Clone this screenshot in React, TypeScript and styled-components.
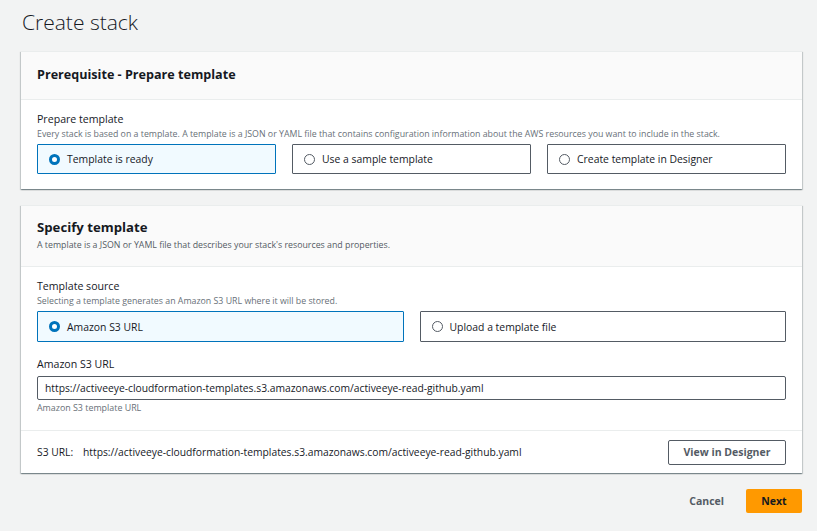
import React from "react";
import styled, { createGlobalStyle } from "styled-components";

const Global = createGlobalStyle`
  html, body { margin: 0; padding: 0; background: #f2f3f3; }
  body { font-family: "Open Sans", "Noto Sans", sans-serif; color: #16191f; }
  * { box-sizing: border-box; }
`;

const Page = styled.div`
  width: 817px;
  height: 531px;
  padding: 8px 15px 0 21px;
  display: flex;
  flex-direction: column;
`;

const Title = styled.h1`
  margin: 0 0 0 1px;
  font-size: 21px;
  font-weight: 300;
  line-height: 28px;
  color: #16191f;
`;

const Card = styled.section<{ $mt: number }>`
  margin-top: ${(p) => p.$mt}px;
  background: #fff;
  box-shadow: 0 1px 1px 0 rgba(0, 28, 36, 0.3), 1px 1px 1px 0 rgba(0, 28, 36, 0.15),
    -1px 1px 1px 0 rgba(0, 28, 36, 0.15);
  border-top: 1px solid #eaeded;
`;

const CardHeader = styled.header<{ $h: number; $pt: number }>`
  height: ${(p) => p.$h}px;
  background: #fafafa;
  border-bottom: 1px solid #eaeded;
  padding: ${(p) => p.$pt}px 16px 0;
  display: flex;
  flex-direction: column;
`;

const HeaderTitle = styled.h2<{ $size: number }>`
  margin: 0;
  font-size: ${(p) => p.$size}px;
  font-weight: 700;
  line-height: 18px;
  color: #16191f;
`;

const HeaderDesc = styled.p`
  margin: 3px 0 0;
  font-size: 8.8px;
  line-height: 12px;
  color: #545b64;
`;

const CardBody = styled.div<{ $pb: number }>`
  padding: 11px 16px ${(p) => p.$pb}px;
  display: flex;
  flex-direction: column;
`;

const Label = styled.div<{ $mt?: number }>`
  margin-top: ${(p) => p.$mt ?? 0}px;
  font-size: 10.6px;
  line-height: 16px;
  color: #16191f;
`;

const Desc = styled.div`
  font-size: 8.8px;
  line-height: 13px;
  color: #687078;
  margin: 1px 0 3px;
`;

const Tiles = styled.div<{ $cols: number }>`
  display: grid;
  grid-template-columns: repeat(${(p) => p.$cols}, 1fr);
  gap: 16px;
`;

const Tile = styled.div<{ $on?: boolean; $h: number }>`
  height: ${(p) => p.$h}px;
  border: 1px solid ${(p) => (p.$on ? "#0073bb" : "#545b64")};
  background: ${(p) => (p.$on ? "#f1faff" : "#fff")};
  border-radius: 1px;
  display: flex;
  align-items: center;
  gap: 7px;
  padding-left: 11px;
  font-size: 10.4px;
  color: #16191f;
`;

const Radio = styled.span<{ $on?: boolean }>`
  width: 11px;
  height: 11px;
  border-radius: 50%;
  flex: none;
  border: ${(p) => (p.$on ? "3.5px solid #0073bb" : "1px solid #545b64")};
  background: #fff;
`;

const Input = styled.div`
  height: 24px;
  border: 1px solid #545b64;
  border-radius: 2px;
  padding: 0 7px;
  display: flex;
  align-items: center;
  font-size: 10.3px;
  color: #16191f;
  margin-top: 4px;
`;

const Hint = styled.div`
  font-size: 8.9px;
  line-height: 12px;
  color: #687078;
  margin-top: 2px;
`;

const Divider = styled.div`
  height: 1px;
  background: #eaeded;
`;

const UrlRow = styled.div`
  height: 42px;
  padding: 0 16px;
  display: flex;
  align-items: center;
  font-size: 10.3px;
  color: #16191f;
`;

const UrlKey = styled.span`
  width: 46px;
`;

const UrlValue = styled.span`
  flex: 1;
`;

const OutlineButton = styled.button`
  height: 25px;
  width: 118px;
  border: 1px solid #545b64;
  border-radius: 2px;
  background: #fff;
  font-family: inherit;
  font-size: 10.5px;
  font-weight: 700;
  color: #545b64;
`;

const Footer = styled.div`
  display: flex;
  justify-content: flex-end;
  align-items: center;
  gap: 22px;
  margin-top: 16px;
`;

const TextButton = styled.button`
  border: none;
  background: none;
  font-family: inherit;
  font-size: 10.5px;
  font-weight: 700;
  color: #545b64;
  padding: 0;
`;

const PrimaryButton = styled.button`
  height: 24px;
  width: 56px;
  border: none;
  border-radius: 2px;
  background: #ff9900;
  font-family: inherit;
  font-size: 10.5px;
  font-weight: 700;
  color: #16191f;
`;

export default function App() {
  return (
    <>
      <Global />
      <Page>
        <Title>Create stack</Title>
        <Card $mt={15}>
          <CardHeader $h={48} $pt={14}>
            <HeaderTitle $size={12.6}>Prerequisite - Prepare template</HeaderTitle>
          </CardHeader>
          <CardBody $pb={15}>
            <Label>Prepare template</Label>
            <Desc>
              Every stack is based on a template. A template is a JSON or YAML file that contains
              configuration information about the AWS resources you want to include in the stack.
            </Desc>
            <Tiles $cols={3}>
              <Tile $on $h={30}>
                <Radio $on />
                Template is ready
              </Tile>
              <Tile $h={30}>
                <Radio />
                Use a sample template
              </Tile>
              <Tile $h={30}>
                <Radio />
                Create template in Designer
              </Tile>
            </Tiles>
          </CardBody>
        </Card>
        <Card $mt={16}>
          <CardHeader $h={61} $pt={12}>
            <HeaderTitle $size={13.2}>Specify template</HeaderTitle>
            <HeaderDesc>
              A template is a JSON or YAML file that describes your stack's resources and properties.
            </HeaderDesc>
          </CardHeader>
          <CardBody $pb={16}>
            <Label>Template source</Label>
            <Desc>Selecting a template generates an Amazon S3 URL where it will be stored.</Desc>
            <Tiles $cols={2}>
              <Tile $on $h={31}>
                <Radio $on />
                Amazon S3 URL
              </Tile>
              <Tile $h={31}>
                <Radio />
                Upload a template file
              </Tile>
            </Tiles>
            <Label $mt={14}>Amazon S3 URL</Label>
            <Input>
              https://activeeye-cloudformation-templates.s3.amazonaws.com/activeeye-read-github.yaml
            </Input>
            <Hint>Amazon S3 template URL</Hint>
          </CardBody>
          <Divider />
          <UrlRow>
            <UrlKey>S3 URL:</UrlKey>
            <UrlValue>
              https://activeeye-cloudformation-templates.s3.amazonaws.com/activeeye-read-github.yaml
            </UrlValue>
            <OutlineButton>View in Designer</OutlineButton>
          </UrlRow>
        </Card>
        <Footer>
          <TextButton>Cancel</TextButton>
          <PrimaryButton>Next</PrimaryButton>
        </Footer>
      </Page>
    </>
  );
}
